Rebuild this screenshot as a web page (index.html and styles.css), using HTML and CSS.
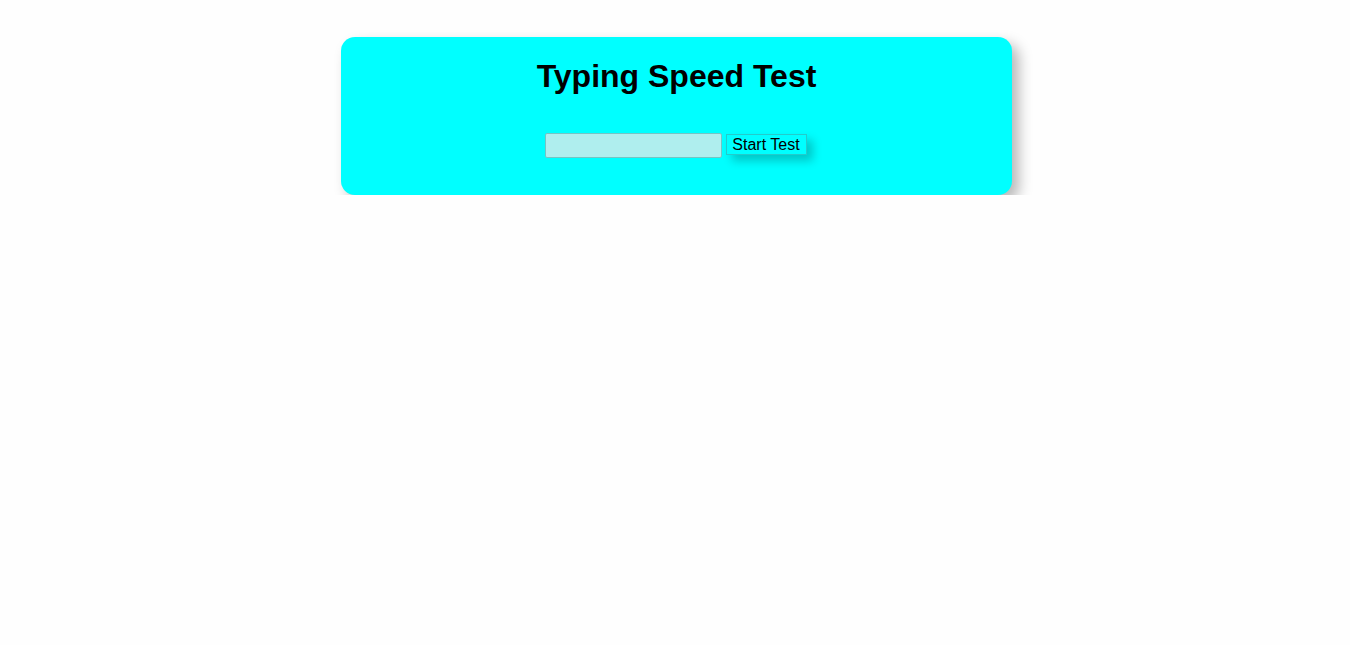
FILE: index.html
```html
<!DOCTYPE html>
<html lang="en">
<head>
<meta charset="utf-8">
<title>Typing Speed Test</title>
<link rel="stylesheet" href="styles.css">
</head>
<body>
<div class="card">
  <h1 class="title">Typing Speed Test</h1>
  <div class="row">
    <input class="entry" type="text"><button class="start">Start Test</button>
  </div>
</div>
</body>
</html>
```

FILE: styles.css
```css
html, body {
  margin: 0;
  padding: 0;
  background: #fefefe;
  font-family: "Liberation Sans", Arial, sans-serif;
}
body {
  padding-top: 37px;
}
.card {
  box-sizing: border-box;
  width: 671px;
  height: 158px;
  margin-left: 341px;
  background: #00ffff;
  border-radius: 14px;
  box-shadow: 7px 7px 14px rgba(0, 0, 0, 0.28);
  padding-top: 1px;
  text-align: center;
}
.title {
  margin: 20px 0 0;
  font-size: 32px;
  font-weight: bold;
  line-height: 37px;
  color: #000;
}
.row {
  margin-top: 38px;
  padding-right: 2px;
  display: flex;
  justify-content: center;
  align-items: flex-start;
  gap: 4px;
}
.entry {
  box-sizing: border-box;
  width: 177px;
  height: 25px;
  margin: 0;
  padding: 2px 4px;
  background: #afeeee;
  border: 1px solid #74c4c4;
  border-radius: 2px;
  font: 16px "Liberation Sans", Arial, sans-serif;
}
.start {
  box-sizing: border-box;
  margin: 1px 0 0;
  height: 21px;
  width: 81px;
  padding: 0 5px;
  background: #00ffff;
  border: 1px solid #22cccc;
  border-radius: 0;
  color: #000;
  font: 16px/19px "Liberation Sans", Arial, sans-serif;
  box-shadow: 6px 6px 10px #00c8c8;
}
```
